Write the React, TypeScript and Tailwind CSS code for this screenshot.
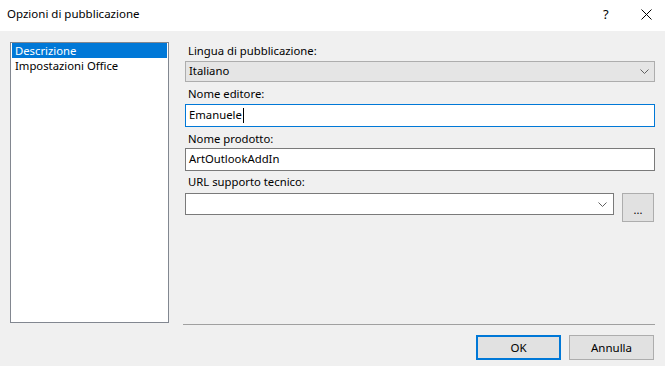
import React from 'react';

const font = "font-['Noto_Sans','Open_Sans',sans-serif]";

function Chevron() {
  return (
    <svg width="9" height="5" viewBox="0 0 9 5" className="block">
      <path d="M0.5 0.5 L4.5 4.5 L8.5 0.5" fill="none" stroke="#606060" strokeWidth="1" />
    </svg>
  );
}

function Label({ children, className = '' }: { children: React.ReactNode; className?: string }) {
  return <div className={`h-4 pl-[3px] text-[11.3px] leading-4 text-black ${className}`}>{children}</div>;
}

export default function App() {
  return (
    <div className={`h-[366px] w-[665px] overflow-hidden bg-[#f0f0f0] ${font}`}>
      {/* title bar */}
      <div className="flex h-[31px] items-start bg-white pt-[6px]">
        <div className="pl-[7px] text-[11.5px] leading-4 text-black">Opzioni di pubblicazione</div>
        <div className="ml-auto flex items-center">
          <div className="w-[12px] text-[13px] leading-4 text-black">?</div>
          <div className="ml-[26px] mr-[13px]">
            <svg width="11" height="11" viewBox="0 0 11 11" className="block">
              <path d="M0.5 0.5 L10.5 10.5 M10.5 0.5 L0.5 10.5" stroke="#000" strokeWidth="1" />
            </svg>
          </div>
        </div>
      </div>

      <div className="flex items-start pt-[11px]">
        {/* list */}
        <div className="ml-[10px] h-[281px] w-[159px] border border-[#828790] bg-white">
          <div className="mx-px h-[15px] bg-[#0078d7] pl-[3px] text-[11.3px] leading-[15px] text-white">
            Descrizione
          </div>
          <div className="mx-px h-[15px] pl-[3px] text-[11.3px] leading-[15px] text-black">Impostazioni Office</div>
        </div>

        {/* right column */}
        <div className="ml-[16px] w-[470px] pt-px">
          <Label>Lingua di pubblicazione:</Label>
          <div className="mt-[2px] flex h-[21px] items-center border border-[#adadad] bg-[#e5e5e5] pl-[3px] pr-[5px] text-[11.3px] text-black">
            <span>Italiano</span>
            <span className="ml-auto">
              <Chevron />
            </span>
          </div>

          <Label className="mt-[4px]">Nome editore:</Label>
          <div className="mt-[2px] flex h-[23px] items-center border border-[#0078d7] bg-white pl-[3px] text-[11.3px] text-black">
            <span>Emanuele</span>
            <span className="ml-px h-[15px] w-px bg-black" />
          </div>

          <Label className="mt-[4px]">Nome prodotto:</Label>
          <div className="mt-px flex h-[23px] items-center border border-[#7a7a7a] bg-white pl-[3px] text-[11.3px] text-black">
            ArtOutlookAddIn
          </div>

          <Label className="mt-[3px]">URL supporto tecnico:</Label>
          <div className="mt-[3px] flex items-start">
            <div className="flex h-[22px] w-[429px] items-center border border-[#7a7a7a] bg-white pr-[6px]">
              <span className="ml-auto">
                <Chevron />
              </span>
            </div>
            <div className="ml-[8px] flex h-[29px] w-[32px] items-center justify-center border border-[#adadad] bg-[#e1e1e1] pt-[3px] text-[11px] leading-none text-black">
              ...
            </div>
          </div>
        </div>
      </div>

      {/* separator */}
      <div className="ml-[183px] mt-px h-px w-[472px] bg-[#a0a0a0]" />

      {/* buttons */}
      <div className="mt-[10px] flex justify-end gap-[8px] pr-[11px]">
        <div className="flex h-[25px] w-[85px] items-center justify-center border-2 border-[#0078d7] bg-[#e1e1e1] text-[11.5px] text-black">
          OK
        </div>
        <div className="flex h-[25px] w-[85px] items-center justify-center border border-[#adadad] bg-[#e1e1e1] text-[11.5px] text-black">
          Annulla
        </div>
      </div>
    </div>
  );
}
